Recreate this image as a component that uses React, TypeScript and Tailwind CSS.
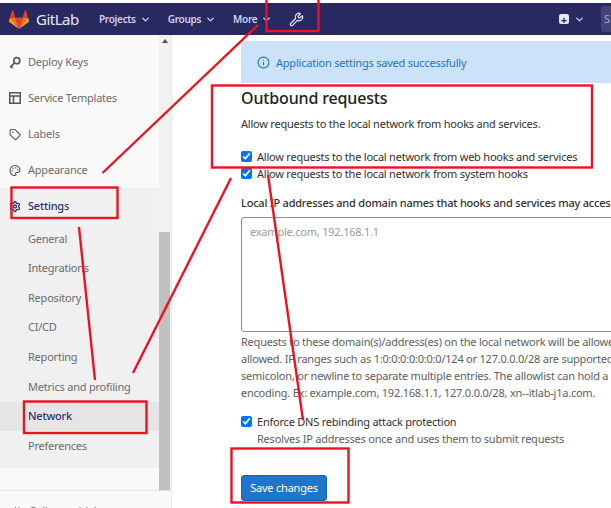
import React from 'react';
import { ChevronDown, ChevronsLeft, Info, Palette, Settings, Tag, Wrench } from 'lucide-react';

const KeyIcon = ({ className }: { className?: string }) => (
  <svg width="13" height="13" viewBox="0 0 13 13" fill="none" stroke="currentColor" strokeWidth="1.8" className={className}>
    <circle cx="8.4" cy="4.6" r="3.3" />
    <path d="M6 7 L1.2 11.8 M2.2 10.8 L3.8 12.2" />
  </svg>
);

const TemplatesIcon = ({ className }: { className?: string }) => (
  <svg width="12" height="12" viewBox="0 0 12 12" fill="none" stroke="currentColor" strokeWidth="1.5" className={className}>
    <rect x=".75" y=".75" width="10.5" height="10.5" />
    <path d="M1 4 H11 M4.5 4 V11" />
  </svg>
);

const topItems = [
  { label: 'Deploy Keys', icon: <KeyIcon /> },
  { label: 'Service Templates', icon: <TemplatesIcon /> },
  { label: 'Labels', icon: <Tag size={13} strokeWidth={2.2} /> },
  { label: 'Appearance', icon: <Palette size={13} strokeWidth={2.2} /> },
];

const subItems = ['General', 'Integrations', 'Repository', 'CI/CD', 'Reporting', 'Metrics and profiling', 'Network', 'Preferences'];

const Tanuki = () => (
  <svg width="20" height="19" viewBox="0 0 20 19">
    <path d="M10 19 L13.7 7.5 H6.3 Z" fill="#e24329" />
    <path d="M10 19 L6.3 7.5 H1 Z" fill="#fc6d26" />
    <path d="M1 7.5 L0 11 Q0 11.8 .6 12.2 L10 19 Z" fill="#fca326" />
    <path d="M1 7.5 H6.3 L4 .6 Q3.6 0 3.2 .6 Z" fill="#e24329" />
    <path d="M10 19 L13.7 7.5 H19 Z" fill="#fc6d26" />
    <path d="M19 7.5 L20 11 Q20 11.8 19.4 12.2 L10 19 Z" fill="#fca326" />
    <path d="M19 7.5 H13.7 L16 .6 Q16.4 0 16.8 .6 Z" fill="#e24329" />
  </svg>
);

const Check = ({ label, sub }: { label: string; sub?: string }) => (
  <div className="flex items-start gap-[5px]">
    <input type="checkbox" defaultChecked className="mt-[2px] h-[11px] w-[11px] accent-[#0075ff]" />
    <div>
      <div className="text-[#303030]">{label}</div>
      {sub && <div className="mt-[1px] text-[#5e5e5e]">{sub}</div>}
    </div>
  </div>
);

const Navbar = () => (
  <div className="mt-[3px] flex h-[32px] shrink-0 items-center bg-[#292961] text-[#d1d1f0]">
    <div className="ml-[9px] flex w-[90px] items-center gap-[7px]">
      <Tanuki />
      <span className="text-[15px] tracking-[-0.5px] text-[#e8e8f5]">GitLab</span>
    </div>
    <div className="flex items-center gap-[17px] text-[10px] font-semibold tracking-[-0.3px]">
      <span className="flex items-center gap-[4px]">Projects <ChevronDown size={11} strokeWidth={3} /></span>
      <span className="flex items-center gap-[4px]">Groups <ChevronDown size={11} strokeWidth={3} /></span>
      <span className="flex items-center gap-[4px]">More <ChevronDown size={11} strokeWidth={3} /></span>
    </div>
    <Wrench size={15} strokeWidth={2} className="ml-[17px] text-[#e4e4f5]" />
    <div className="ml-auto flex items-center">
      <div className="flex h-[10px] w-[10px] items-center justify-center rounded-[2px] bg-[#e6e6f5] text-[11px] leading-none font-bold text-[#292961]">+</div>
      <ChevronDown size={11} strokeWidth={3} className="ml-[5px]" />
      <div className="ml-[16px] h-[26px] w-[10px] rounded-l-[3px] bg-[#43437a] pl-[3px] text-[11px] leading-[26px] text-[#a8a8cc]">S</div>
    </div>
  </div>
);

const Sidebar = () => (
  <div className="flex w-[172px] shrink-0 flex-col border-r border-[#e9e9e9] bg-[#fafafa] text-[11px] tracking-[-0.22px] text-[#6b6b6b]">
    <div className="relative flex min-h-0 flex-1">
      <div className="flex w-[159px] shrink-0 flex-col pt-[9px]">
        {topItems.map(({ label, icon }) => (
          <div key={label} className="flex h-[36px] items-center gap-[7px] pl-[9px]">
            <span className="flex w-[12px] justify-center text-[#555555]">{icon}</span>
            <span>{label}</span>
          </div>
        ))}
        <div className="bg-[#f0f0f0] pb-[7px]">
          <div className="flex h-[36px] items-center gap-[7px] pl-[9px] font-medium text-[#303070]">
            <span className="flex w-[12px] justify-center">
              <Settings size={15} strokeWidth={2.6} />
            </span>
            <span>Settings</span>
          </div>
          <div className="flex flex-col">
            {subItems.map((item) => (
              <div
                key={item}
                className={item === 'Network' ? 'flex h-[29.6px] items-center bg-[#e5e5e5] pl-[28px] font-medium text-[#303070]' : 'flex h-[29.6px] items-center pl-[28px]'}
              >
                {item}
              </div>
            ))}
          </div>
        </div>
      </div>
      {/* scrollbar */}
      <div className="flex w-[12px] flex-col bg-[#f1f1f1]">
        <div className="mx-auto mt-[4px] h-0 w-0 border-x-[3px] border-b-[4px] border-x-transparent border-b-[#505050]" />
        <div className="mt-auto h-[258px] w-[11px] bg-[#c1c1c1]" />
      </div>
    </div>
    <div className="flex h-[18px] shrink-0 items-start gap-[7px] border-t border-[#e5e5e5] pl-[10px] pt-[13px] leading-[14px]">
      <ChevronsLeft size={12} strokeWidth={2} className="text-[#555555]" />
      <span>Collapse sidebar</span>
    </div>
  </div>
);

const Main = () => (
  <div className="min-w-0 flex-1 overflow-hidden pt-[6px] pl-[69px] text-[11px] tracking-[-0.22px] whitespace-nowrap text-[#303030]">
    <div className="flex h-[42px] items-center gap-[6px] bg-[#cbe2f9] pl-[16px] text-[#1f75cb]">
      <Info size={13} strokeWidth={2} className="mt-[1px]" />
      <span className="pt-[2px]">Application settings saved successfully</span>
    </div>
    <h2 className="mt-[4px] text-[16px] leading-[22px] font-medium tracking-[-0.15px] text-[#202020]">Outbound requests</h2>
    <p className="mt-[7px] leading-[16px]">Allow requests to the local network from hooks and services.</p>
    <div className="mt-[17px] flex flex-col gap-[1px] leading-[16px]">
      <Check label="Allow requests to the local network from web hooks and services" />
      <Check label="Allow requests to the local network from system hooks" />
    </div>
    <div className="mt-[13px] leading-[16px] font-medium">Local IP addresses and domain names that hooks and services may access</div>
    <div className="mt-[6px] h-[115px] w-[500px] rounded-[3px] border border-[#8f8f8f] px-[8px] pt-[6px] text-[#9a9a9a]">example.com, 192.168.1.1</div>
    <div className="mt-[1px] leading-[17px] text-[#5e5e5e]">
      <div>Requests to these domain(s)/address(es) on the local network will be allowed when local requests from hooks and services are not</div>
      <div>allowed. IP ranges such as 1:0:0:0:0:0:0:0/124 or 127.0.0.0/28 are supported. Domain wildcards are not supported. Use comma,</div>
      <div>semicolon, or newline to separate multiple entries. The allowlist can hold a maximum of 1000 entries. Domains should use IDNA</div>
      <div>encoding. Ex: example.com, 192.168.1.1, 127.0.0.0/28, xn--itlab-j1a.com.</div>
    </div>
    <div className="mt-[13px] leading-[16px]">
      <Check label="Enforce DNS rebinding attack protection" sub="Resolves IP addresses once and uses them to submit requests" />
    </div>
    <button className="mt-[28px] flex h-[26px] w-[86px] items-center justify-center rounded-[3px] border border-[#1068bf] bg-[#1f75cb] pt-[1px] text-white">Save changes</button>
  </div>
);

// red markup drawn on top of the screenshot
const Markup = () => (
  <svg className="pointer-events-none absolute inset-0" width="611" height="508" fill="none" stroke="#ee1122" strokeWidth="2.4">
    <rect x="266.5" y="-4" width="52" height="35" />
    <rect x="212" y="85.5" width="380" height="82" />
    <rect x="11.5" y="187.5" width="106" height="30.5" />
    <rect x="24" y="401.5" width="122.5" height="31.5" />
    <rect x="231.5" y="448.5" width="117" height="54" />
    <path d="M258 25 L102.5 173" />
    <path d="M231 178 L133 373" />
    <path d="M79 227 L95 380" />
    <path d="M268 175 L303 420" />
  </svg>
);

export default function App() {
  return (
    <div className="relative flex h-[508px] w-[611px] flex-col overflow-hidden bg-white font-['Noto_Sans',sans-serif]">
      <Navbar />
      <div className="flex min-h-0 flex-1">
        <Sidebar />
        <Main />
      </div>
      <Markup />
    </div>
  );
}
